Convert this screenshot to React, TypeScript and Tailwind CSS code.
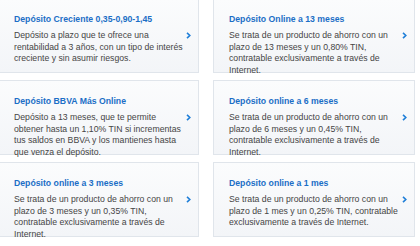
import React from "react"

type Deposito = {
    titulo: string
    lineas: string[]
}

const depositos: Deposito[] = [
    {
        titulo: "Depósito Creciente 0,35-0,90-1,45",
        lineas: ["Depósito a plazo que te ofrece una", "rentabilidad a 3 años, con un tipo de interés", "creciente y sin asumir riesgos."],
    },
    {
        titulo: "Depósito Online a 13 meses",
        lineas: ["Se trata de un producto de ahorro con un", "plazo de 13 meses y un 0,80% TIN,", "contratable exclusivamente a través de", "Internet."],
    },
    {
        titulo: "Depósito BBVA Más Online",
        lineas: ["Depósito a 13 meses, que te permite", "obtener hasta un 1,10% TIN si incrementas", "tus saldos en BBVA y los mantienes hasta", "que venza el depósito."],
    },
    {
        titulo: "Depósito online a 6 meses",
        lineas: ["Se trata de un producto de ahorro con un", "plazo de 6 meses y un 0,45% TIN,", "contratable exclusivamente a través de", "Internet."],
    },
    {
        titulo: "Depósito online a 3 meses",
        lineas: ["Se trata de un producto de ahorro con un", "plazo de 3 meses y un 0,35% TIN,", "contratable exclusivamente a través de", "Internet."],
    },
    {
        titulo: "Depósito online a 1 mes",
        lineas: ["Se trata de un producto de ahorro con un", "plazo de 1 mes y un 0,25% TIN, contratable", "exclusivamente a través de Internet."],
    },
]

function Chevron() {
    return (
        <svg width="5" height="7" viewBox="0 0 5 7" className="shrink-0">
            <path d="M1 0.8 L3.8 3.5 L1 6.2" fill="none" stroke="#1f7fd8" strokeWidth="1.6" />
        </svg>
    )
}

function Tarjeta({ d }: { d: Deposito }) {
    return (
        <div className="h-[75px] flex items-center border border-[#e0e5eb] bg-gradient-to-b from-[#fbfcfd] to-[#f3f5f8] pl-[15px] pr-[7px]">
            <div className="flex-1 self-start pt-[14px]">
                <div className="text-[8.7px] leading-[12px] font-bold text-[#1b6ec6]">{d.titulo}</div>
                <p className="mt-[5px] text-[8.7px] leading-[11.5px] text-[#454545]">
                    {d.lineas.map((l, i) => (
                        <span key={i} className="block whitespace-nowrap">{l}</span>
                    ))}
                </p>
            </div>
            <Chevron />
        </div>
    )
}

export default function App() {
    return (
        <div className="w-[420px] h-[246px] overflow-hidden bg-white font-['Liberation_Sans',Arial,sans-serif]">
            <div className="grid grid-cols-[201px_202px] gap-x-[14px] gap-y-[7px] ml-[-2px] mt-[-2px]">
                {depositos.map((d, i) => (
                    <Tarjeta key={i} d={d} />
                ))}
            </div>
        </div>
    )
}
